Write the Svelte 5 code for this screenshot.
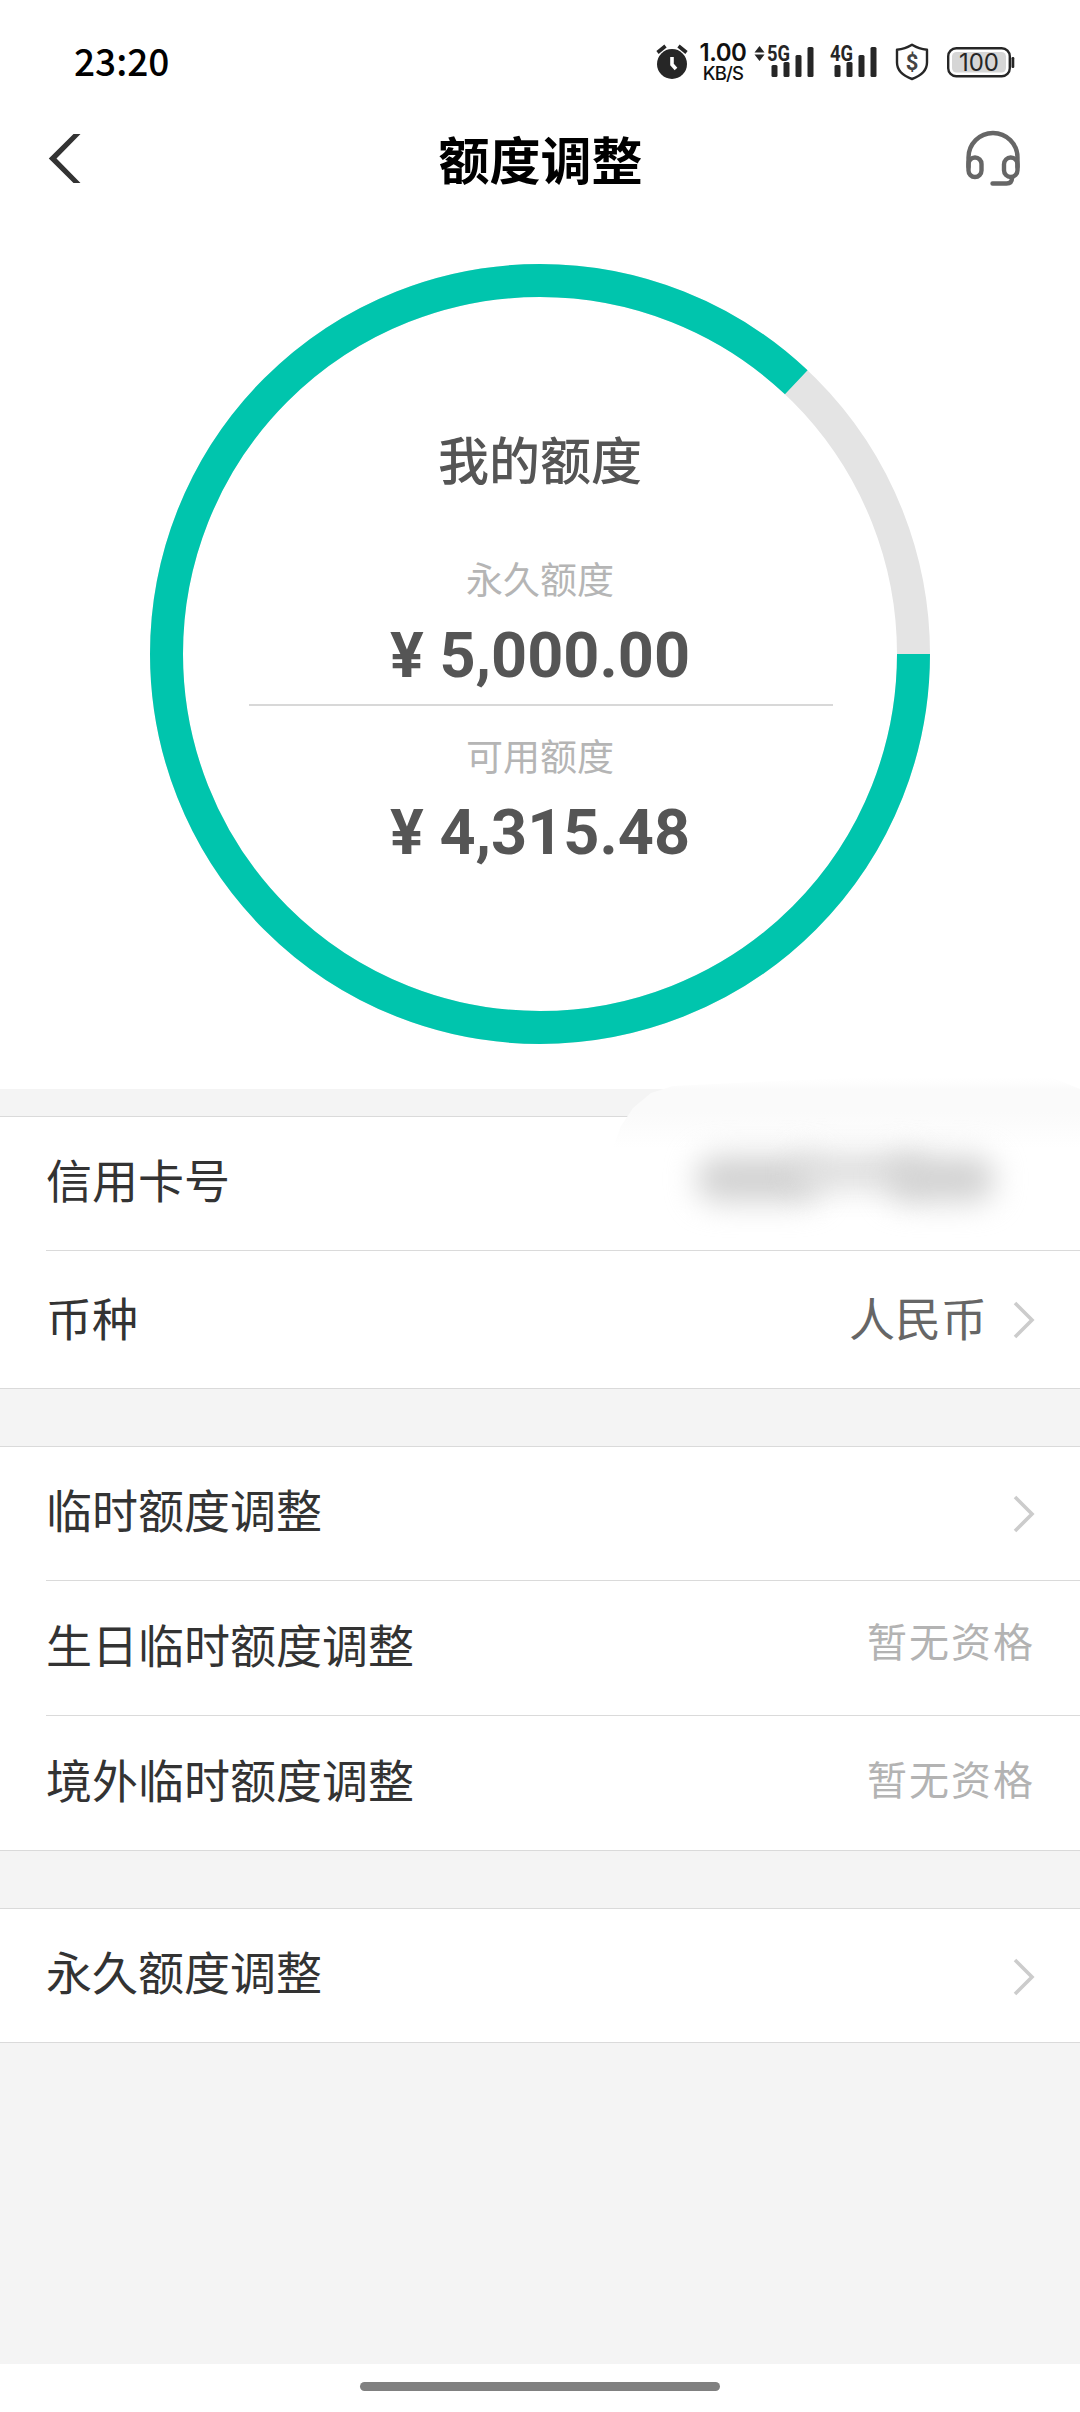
<script lang="ts">
    type Row = {
        label: string;
        value?: string;
        muted?: boolean;
        masked?: boolean;
        arrow?: boolean;
    };

    const total = 5000;
    const available = 4315.48;
    const percent = Math.ceil((available / total) * 100);

    // ring geometry
    const radius = 373.5;
    const circumference = 2 * Math.PI * radius;
    const filled = (circumference * percent) / 100;

    const groups: Row[][] = [
        [
            { label: "信用卡号", masked: true },
            { label: "币种", value: "人民币", arrow: true },
        ],
        [
            { label: "临时额度调整", arrow: true },
            { label: "生日临时额度调整", value: "暂无资格", muted: true },
            { label: "境外临时额度调整", value: "暂无资格", muted: true },
        ],
        [{ label: "永久额度调整", arrow: true }],
    ];

    function money(n: number) {
        return "¥ " + n.toLocaleString("en-US", { minimumFractionDigits: 2 });
    }
</script>

{#snippet signal(name: string)}
    <svg class="signal" width="50" height="38" viewBox="0 0 50 38">
        <text class="net" x="3" y="19" textLength="23" lengthAdjust="spacingAndGlyphs">{name}</text>
        <rect x="7.5" y="23" width="6" height="12" rx="1.5" />
        <rect x="19.5" y="20" width="6" height="15" rx="1.5" />
        <rect x="31.5" y="13" width="6" height="22" rx="1.5" />
        <rect x="43.5" y="5" width="6" height="30" rx="1.5" />
    </svg>
{/snippet}

<div class="page">
    <div class="statusbar">
        <span class="time">23:20</span>
        <div class="status-icons">
            <svg class="alarm" width="32" height="36" viewBox="0 0 32 36">
                <circle cx="16" cy="20" r="15" />
                <path d="M1.5 8.5 9.5 2M22.5 2l8 6.5" stroke="#262626" stroke-width="3.6" />
                <path d="M16 13v7.5l4 4.5" fill="none" stroke="#fff" stroke-width="3.6" />
            </svg>
            <div class="speed">
                <span class="rate">1.00</span>
                <span class="unit">KB/S</span>
            </div>
            <svg class="updown" width="11" height="36" viewBox="0 0 11 36">
                <path d="M5.5 2 10.5 8.5H.5zM5.5 17 .5 10.5h10z" />
            </svg>
            {@render signal("5G")}
            {@render signal("4G")}
            <svg class="shield" width="34" height="38" viewBox="0 0 34 38">
                <path
                    d="M17 1.8C21.5 4.6 26 6.3 32 6.8V19.5C32 27 26.5 32.5 17 36 7.5 32.5 2 27 2 19.5V6.8C8 6.3 12.5 4.6 17 1.8Z"
                    fill="none"
                    stroke="#262626"
                    stroke-width="2.4"
                    stroke-linejoin="round"
                />
                <text class="dollar" x="17" y="26.5" text-anchor="middle">$</text>
            </svg>
            <svg class="battery" width="68" height="32" viewBox="0 0 68 32">
                <rect x="1.2" y="2.2" width="61.6" height="28" rx="8" fill="#fff" stroke="#262626" stroke-width="2.4" />
                <rect x="5" y="6" width="54" height="20.5" rx="4.5" fill="#d6d6d6" />
                <rect x="64.5" y="11" width="2.8" height="11" rx="1.2" />
                <text class="level" x="32" y="25" text-anchor="middle">100</text>
            </svg>
        </div>
    </div>

    <header class="navbar">
        <svg class="back" width="34" height="50" viewBox="0 0 34 50">
            <path d="M25.5 0H32.5L8.5 24.5 32.5 49H25.5L.8 24.5Z" fill="#333" />
        </svg>
        <h1>额度调整</h1>
        <svg class="service" width="56" height="58" viewBox="0 0 56 58">
            <g fill="none" stroke="#666" stroke-width="4.4" stroke-linecap="round">
                <path d="M3.5 37V27.500a24.500 24.500 0 0 1 49 0V37" />
                <rect x="3.5" y="27.500" width="13" height="19.500" rx="6.500" />
                <rect x="39" y="27.500" width="13.500" height="19.500" rx="6.700" />
                <path d="M47 48c0 3.500-2 5.500-5.500 5.500H27.500" />
            </g>
        </svg>
    </header>

    <section class="quota">
        <svg class="ring" width="780" height="780" viewBox="0 0 780 780">
            <circle cx="390" cy="390" r={radius} fill="none" stroke="#e4e4e4" stroke-width="33" />
            <circle
                cx="390"
                cy="390"
                r={radius}
                fill="none"
                stroke="#00c5ad"
                stroke-width="33"
                stroke-dasharray="{filled} {circumference}"
            />
        </svg>
        <div class="quota-text">
            <h2>我的额度</h2>
            <span class="caption">永久额度</span>
            <strong>{money(total)}</strong>
            <hr />
            <span class="caption">可用额度</span>
            <strong>{money(available)}</strong>
        </div>
    </section>

    <main>
        {#each groups as rows}
            <ul class="group">
                {#each rows as row}
                    <li class="row">
                        <span class="label">{row.label}</span>
                        {#if row.value}
                            <span class="value" class:muted={row.muted}>{row.value}</span>
                        {/if}
                        {#if row.arrow}
                            <svg class="arrow" width="22" height="38" viewBox="0 0 22 38">
                                <path d="M2 2 19 19 2 36" fill="none" stroke="#ccc" stroke-width="3.6" />
                            </svg>
                        {/if}
                        {#if row.masked}
                            <div class="mask">
                                <i class="haze"></i>
                                <i class="smudge left"></i>
                                <i class="smudge middle"></i>
                                <i class="smudge right"></i>
                                <i class="gap"></i>
                            </div>
                        {/if}
                    </li>
                {/each}
            </ul>
        {/each}
    </main>

    <footer><div class="home"></div></footer>
</div>

<style>
    :global(body) {
        margin: 0;
        background: #fff;
    }
    .page {
        display: flex;
        flex-direction: column;
        width: 1080px;
        height: 2412px;
        overflow: hidden;
        background: #fff;
        font-family: "Noto Sans CJK SC", sans-serif;
        color: #333;
    }
    .statusbar {
        display: flex;
        justify-content: space-between;
        box-sizing: border-box;
        height: 104px;
        padding: 43px 65px 0 74px;
    }
    .time {
        font-size: 37px;
        line-height: 35px;
        font-weight: 500;
        color: #000;
    }
    .status-icons {
        display: flex;
        align-items: flex-start;
        height: 38px;
        fill: #262626;
    }
    .alarm {
        margin-top: 1px;
    }
    .speed {
        display: flex;
        flex-direction: column;
        align-items: center;
        width: 48px;
        margin-left: 11px;
        font-family: Inter, sans-serif;
        font-weight: 500;
        color: #111;
    }
    .rate {
        font-size: 24px;
        line-height: 20px;
        font-weight: 600;
        letter-spacing: -0.5px;
    }
    .unit {
        font-size: 18.5px;
        line-height: 20px;
        letter-spacing: -0.8px;
    }
    .updown {
        margin: 1px 0 0 7px;
    }
    .signal {
        margin: -1px 0 0 -1px;
    }
    .signal + .signal {
        margin-left: 13px;
    }
    .net {
        font: 700 22px Roboto, sans-serif;
    }
    .shield {
        margin-left: 18px;
    }
    .dollar {
        font: 700 22px Roboto, sans-serif;
        fill: #444;
    }
    .battery {
        margin: 3px 0 0 18px;
    }
    .level {
        font: 400 24px Inter, sans-serif;
    }
    .navbar {
        display: flex;
        align-items: center;
        justify-content: space-between;
        height: 108px;
        padding: 0 59px 0 48px;
    }
    .back {
        margin-top: 2px;
    }
    h1 {
        margin: 0 0 0 34px;
        font-size: 51px;
        line-height: 60px;
        font-weight: 700;
        color: #000;
    }
    .service {
        margin-top: 1px;
    }
    .quota {
        display: grid;
        justify-content: center;
        padding: 52px 0 45px;
    }
    .ring,
    .quota-text {
        grid-area: 1 / 1;
    }
    .quota-text {
        display: flex;
        flex-direction: column;
        align-items: center;
        padding-top: 164px;
        color: #555;
    }
    h2 {
        margin: 0 0 70px;
        font-size: 51px;
        line-height: 60px;
        font-weight: 500;
    }
    .caption {
        font-size: 37px;
        line-height: 40px;
        color: #b5b5b5;
    }
    strong {
        margin-top: 26px;
        font: 700 63px/64px Roboto, sans-serif;
        white-space: pre;
    }
    hr {
        width: 584px;
        height: 2px;
        margin: 16px 0 29px 2px;
        border: 0;
        background: #d8d8d8;
    }
    main {
        flex: 1;
        padding-top: 27px;
        background: #f4f4f4;
    }
    .group {
        margin: 0 0 57px;
        padding: 0;
        border: 1px solid #dadada;
        border-width: 1px 0;
        background: #fff;
        list-style: none;
    }
    .row {
        position: relative;
        display: flex;
        align-items: center;
        height: 133px;
        margin-left: 46px;
        padding-right: 45px;
    }
    .row + .row {
        height: 134px;
        border-top: 1px solid #dadada;
    }
    .group:first-child .row:last-child {
        height: 137px;
    }
    .label {
        flex: 1;
        padding-bottom: 11px;
        font-size: 46px;
        line-height: 60px;
    }
    .value {
        padding-bottom: 8px;
        font-size: 46px;
        line-height: 60px;
        color: #666;
    }
    .group:first-child .row:last-child .label {
        padding-bottom: 8px;
    }
    .muted {
        padding-bottom: 17px;
        font-size: 40px;
        letter-spacing: 2px;
        color: #b3b3b3;
    }
    .row:last-child .muted {
        padding-bottom: 11px;
    }
    .arrow {
        margin-left: 26px;
    }
    .group:last-child .arrow {
        margin-top: 3px;
    }

    /* smeared card number */
    .mask {
        position: absolute;
        top: -39px;
        right: 0;
        width: 470px;
        height: 180px;
        overflow: hidden;
    }
    .mask i {
        position: absolute;
    }
    .haze {
        inset: 0 0 0 3px;
        background: linear-gradient(#fff, #fafafa 12px, #fafafa 34px, #fff 70px);
        clip-path: polygon(0 70px, 8px 48px, 20px 30px, 38px 15px, 60px 8px, 230px 0, 440px 0, 100% 11px, 100% 160px, 0 160px);
    }
    .smudge {
        border-radius: 20px;
        background: #d2d2d2;
        filter: blur(15px);
    }
    .left {
        left: 87px;
        top: 78px;
        width: 124px;
        height: 46px;
    }
    .middle {
        left: 185px;
        top: 76px;
        width: 130px;
        height: 34px;
        background: #dcdcdc;
    }
    .right {
        left: 278px;
        top: 78px;
        width: 106px;
        height: 46px;
    }
    .gap {
        left: 70px;
        top: 170px;
        width: 230px;
        height: 5px;
        background: linear-gradient(90deg, transparent, #fff 30%, #fff 72%, transparent);
    }
    footer {
        display: flex;
        justify-content: center;
        height: 30px;
        padding-top: 18px;
    }
    .home {
        width: 360px;
        height: 9px;
        border-radius: 5px;
        background: #808080;
    }
</style>
